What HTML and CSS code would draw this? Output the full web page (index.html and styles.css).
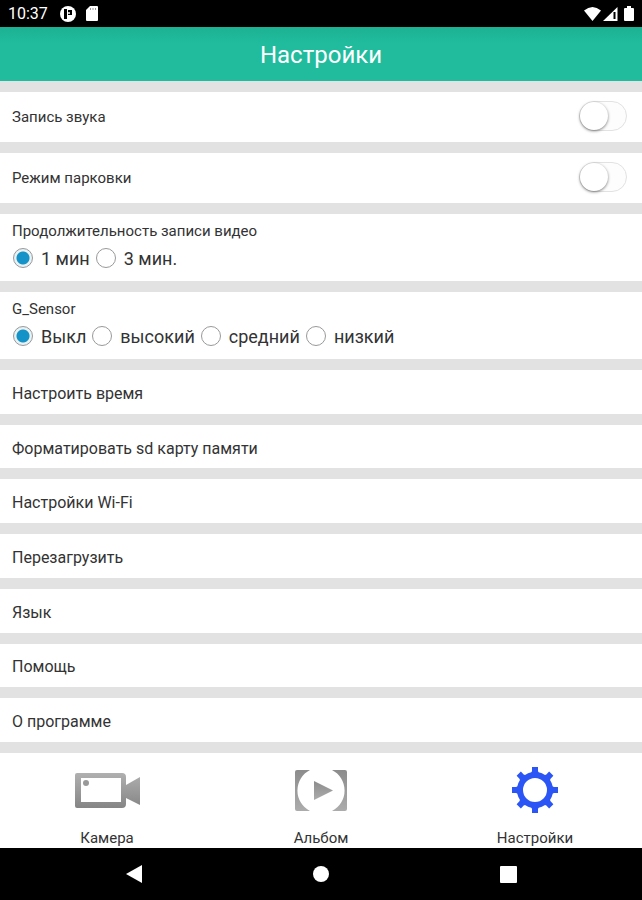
FILE: index.html
```html
<!DOCTYPE html>
<html lang="ru">
  <head>
    <meta charset="utf-8" />
    <meta name="viewport" content="width=device-width, initial-scale=1" />
    <title>Настройки</title>
    <link rel="stylesheet" href="styles.css">
  </head>
  <body>
    <div class="statusbar">
      <span class="clock">10:37</span>
      <svg class="round-icon" width="16" height="16" viewBox="0 0 16 16">
        <circle cx="8" cy="8" r="8" fill="#fff" />
        <path d="M4 3h3v10H4zM8 4h4v5H8z" fill="#000" />
        <circle cx="9" cy="7" r="1" fill="#fff" />
      </svg>
      <svg width="12" height="15" viewBox="0 0 12 15">
        <path d="M4 0h7a1 1 0 0 1 1 1v13a1 1 0 0 1-1 1H1a1 1 0 0 1-1-1V4z" fill="#fff" />
        <path d="M4.500 2v2M7 2v2M9.500 2v2" stroke="#999" />
      </svg>
      <div class="signals">
        <svg width="17" height="14" viewBox="0 0 17 14">
          <path d="M0 3.500Q8.500-3.500 17 3.500L8.500 14z" fill="#fff" />
        </svg>
        <svg width="15" height="14" viewBox="0 0 15 14">
          <path d="M0 14L14.500 0v14z" fill="#fff" />
          <path d="M11.500 5v7" stroke="#000" stroke-width="2" />
        </svg>
        <svg class="battery" width="10" height="15" viewBox="0 0 10 15">
          <path d="M3 0h4v2h2a1 1 0 0 1 1 1v11a1 1 0 0 1-1 1H1a1 1 0 0 1-1-1V3a1 1 0 0 1 1-1h2z" fill="#fff" />
        </svg>
      </div>
    </div>

    <h1>Настройки</h1>

    <main>
      <label class="row switch-row">
        <span>Запись звука</span>
        <input type="checkbox" class="switch" />
      </label>
      <label class="row switch-row">
        <span>Режим парковки</span>
        <input type="checkbox" class="switch" />
      </label>

      <fieldset class="row">
        <legend>Продолжительность записи видео</legend>
        <div class="options">
          <label><input type="radio" name="duration" checked />1 мин</label>
          <label><input type="radio" name="duration" />3 мин.</label>
        </div>
      </fieldset>
      <fieldset class="row">
        <legend>G_Sensor</legend>
        <div class="options">
          <label><input type="radio" name="sensor" checked />Выкл</label>
          <label><input type="radio" name="sensor" />высокий</label>
          <label><input type="radio" name="sensor" />средний</label>
          <label><input type="radio" name="sensor" />низкий</label>
        </div>
      </fieldset>

      <button class="row item">Настроить время</button>
      <button class="row item">Форматировать sd карту памяти</button>
      <button class="row item">Настройки Wi-Fi</button>
      <button class="row item">Перезагрузить</button>
      <button class="row item">Язык</button>
      <button class="row item">Помощь</button>
      <button class="row item">О программе</button>
    </main>

    <nav class="tabs">
      <a href="#camera">
        <svg width="66" height="48" viewBox="0 0 66 48">
          <defs>
            <linearGradient id="gray" x1="0" y1="0" x2="0" y2="1">
              <stop offset="0" stop-color="#b0b0b0" />
              <stop offset="1" stop-color="#858585" />
            </linearGradient>
          </defs>
          <path d="M3 7h45a4 4 0 0 1 4 4v8l14-8v28l-14-7v6a4 4 0 0 1-4 4H3a2 2 0 0 1-2-2V9a2 2 0 0 1 2-2zM7 12v24h40V12z" fill="url(#gray)" fill-rule="evenodd" />
          <circle cx="12" cy="17" r="3" fill="#999" />
        </svg>
        Камера
      </a>
      <a href="#album">
        <svg width="54" height="48" viewBox="0 0 54 48">
          <defs>
            <linearGradient id="corner" x1="0" y1="0" x2="0" y2="1">
              <stop offset="0" stop-color="#8c8c8c" />
              <stop offset="1" stop-color="#acacac" />
            </linearGradient>
          </defs>
          <path d="M16 4H3a2 2 0 0 0-2 2v37a2 2 0 0 0 2 2h13A23 23 0 0 1 16 4zM38 4h13a2 2 0 0 1 2 2v37a2 2 0 0 1-2 2H38A23 23 0 0 0 38 4z" fill="url(#corner)" />
          <path d="M20 15l19 9.500-19 9.500z" fill="url(#corner)" />
        </svg>
        Альбом
      </a>
      <a href="#settings">
        <svg width="48" height="48" viewBox="-24 -24 48 48">
          <g fill="#2b55f5">
            <path id="teeth" d="M-3-23h6v4l2 5h-10l2-5zM-3 23h6v-4l2-5h-10l2 5zM-23-3v6h4l5 2v-10l-5 2zM23-3v6h-4l-5 2v-10l5 2z" />
            <use href="#teeth" transform="rotate(45)" />
          </g>
          <circle r="15" fill="#fff" stroke="#2b55f5" stroke-width="6" />
        </svg>
        Настройки
      </a>
    </nav>

    <div class="system-nav">
      <button aria-label="Назад">
        <svg width="16" height="18" viewBox="0 0 16 18"><path d="M16 0v18L0 9z" fill="#fff" /></svg>
      </button>
      <button aria-label="Домой">
        <svg width="16" height="16" viewBox="0 0 16 16"><circle cx="8" cy="8" r="8" fill="#fff" /></svg>
      </button>
      <button aria-label="Недавние">
        <svg width="17" height="17" viewBox="0 0 17 17"><rect width="17" height="17" rx="1" fill="#fff" /></svg>
      </button>
    </div>
  </body>
</html>
```

FILE: styles.css
```css
* {
  box-sizing: border-box;
}

body {
  margin: 0;
  min-height: 100vh;
  display: flex;
  flex-direction: column;
  font-family: Roboto, sans-serif;
  font-size: 15px;
  color: #333;
  background-color: #fff;
}

svg {
  display: block;
}

.statusbar {
  display: flex;
  align-items: center;
  height: 27px;
  padding: 0 8px;
  color: #fff;
  background-color: #000;
}

.clock {
  margin-right: 12px;
  font-size: 16px;
}

.round-icon {
  margin-right: 10px;
}

.signals {
  display: flex;
  align-items: center;
  gap: 2px;
  margin-left: auto;
}

.battery {
  margin-left: 4px;
}

h1 {
  margin: 0;
  padding-top: 2px;
  font-size: 24px;
  font-weight: 400;
  line-height: 52px;
  text-align: center;
  color: #fff;
  background: linear-gradient(#1cb193, #20bc9d 16px);
}

main {
  flex: 1;
  display: flex;
  flex-direction: column;
  gap: 11px;
  padding: 11px 0;
  background-color: #e2e2e2;
}

.row {
  margin: 0;
  border: 0;
  padding: 0 12px;
  background-color: #fff;
}

.switch-row {
  display: flex;
  align-items: center;
  justify-content: space-between;
  height: 50px;
}

.switch {
  appearance: none;
  width: 48px;
  height: 30px;
  margin: 0 3px 2px 0;
  border: 1px solid #e2e2e2;
  border-radius: 15px;
  background-color: #fdfdfd;
}

.switch::before {
  content: "";
  display: block;
  width: 28px;
  height: 28px;
  border-radius: 50%;
  background-color: #fff;
  box-shadow: 0 1px 3px rgba(0, 0, 0, 0.5);
}

.switch:checked {
  background-color: #20bc9d;
}

.switch:checked::before {
  margin-left: 18px;
}

fieldset {
  min-width: 0;
  height: 67px;
}

legend {
  float: left;
  width: 100%;
  padding: 7px 0 0;
  line-height: 20px;
}

.options {
  clear: both;
  display: flex;
  gap: 5px;
  font-size: 18px;
}

.options label {
  display: flex;
  align-items: center;
  height: 34px;
}

.options input {
  appearance: none;
  width: 20px;
  height: 20px;
  margin: 0 8px 0 1px;
  border: 1px solid #999;
  border-radius: 50%;
}

.options input:checked {
  background: radial-gradient(circle, #1593c8 6px, #e8f1f4 7px);
}

.item {
  flex: 1 0 40px;
  padding-top: 3px;
  font: inherit;
  font-size: 16px;
  color: inherit;
  text-align: left;
}

.tabs {
  display: flex;
  height: 95px;
}

.tabs a {
  flex: 1;
  display: flex;
  flex-direction: column;
  align-items: center;
  justify-content: space-between;
  padding-top: 13px;
  line-height: 20px;
  color: #333;
  text-decoration: none;
}

.system-nav {
  display: flex;
  height: 52px;
  padding: 0 40px;
  background-color: #000;
}

.system-nav button {
  flex: 1;
  display: flex;
  align-items: center;
  justify-content: center;
  border: 0;
  background: none;
}
```
